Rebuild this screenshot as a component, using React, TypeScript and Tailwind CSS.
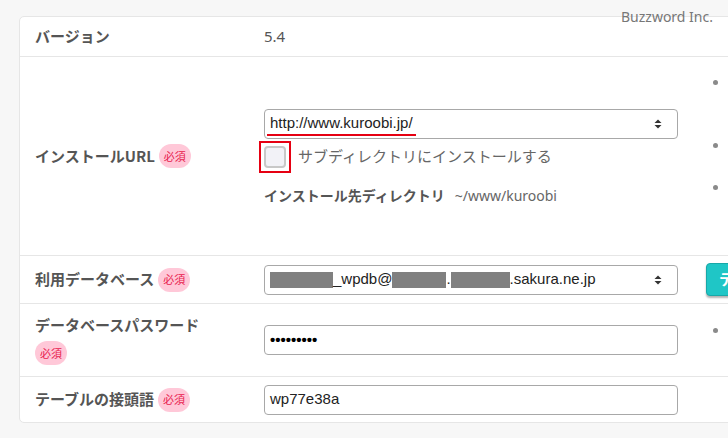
import React from 'react';

const Badge = () => (
  <span className="inline-flex items-center justify-center h-[24px] w-[32px] rounded-full bg-[#ffc8d8] text-[11px] text-[#e8204e] font-normal [font-family:'Noto_Sans_CJK_JP',sans-serif]">
    必須
  </span>
);

const Arrows = () => (
  <svg width="10" height="12" viewBox="0 0 10 12" className="shrink-0">
    <path d="M1.5 5 L5 1.5 L8.5 5 Z" fill="#333" />
    <path d="M1.5 7 L5 10.5 L8.5 7 Z" fill="#333" />
  </svg>
);

const Dot = ({ className = '' }: { className?: string }) => (
  <span className={`block w-[5px] h-[5px] rounded-full bg-[#8a8a8a] ml-[7px] ${className}`} />
);

const Redact = ({ w }: { w: string }) => <span className={`inline-block h-[16px] bg-[#808080] ${w}`} />;

const labelCls = 'w-[229px] shrink-0 text-[15px] font-bold text-[#555] flex items-center gap-[4px]';
const fieldCls =
  'w-[414px] h-[30px] border border-[#a8a8a8] rounded-[4px] bg-white flex items-center px-[5px] text-[15px] text-[#222] [font-family:"Liberation_Sans",Arial,sans-serif]';

export default function App() {
  return (
    <div className="w-[728px] h-[438px] overflow-hidden bg-[#f7f7f7] relative [font-family:'Noto_Sans_CJK_JP','Noto_Sans',sans-serif]">
      <div className="absolute right-[15px] top-[6px] text-[14px] text-[#777] [font-family:'Noto_Sans',sans-serif] z-10">
        Buzzword Inc.
      </div>
      <div className="pt-[16px] pl-[19px]">
        <div className="w-[900px] bg-white border border-[#e6e6e6] rounded-l-[5px]">
          {/* version */}
          <div className="h-[40px] flex items-center pl-[15px] border-b border-[#e6e6e6]">
            <div className={labelCls}>バージョン</div>
            <div className="text-[15px] text-[#555] [font-family:'Noto_Sans',sans-serif]">5.4</div>
          </div>

          {/* install url */}
          <div className="h-[199px] flex pl-[15px] border-b border-[#e6e6e6]">
            <div className={`${labelCls} self-center`}>
              インストールURL <Badge />
            </div>
            <div className="self-center flex flex-col mt-[2px]">
              <div className={`${fieldCls} justify-between pr-[14px]`}>
                <span className="relative">
                  http://www.kuroobi.jp/
                  <span className="absolute left-[-3px] right-[-3px] bottom-[-1px] h-[2px] bg-[#e60012]" />
                </span>
                <Arrows />
              </div>
              <div className="flex items-center mt-[2px] h-[32px]">
                <div className="w-[32px] h-[32px] border-2 border-[#e60012] flex items-center justify-center ml-[-5px]">
                  <span className="w-[22px] h-[22px] rounded-[4px] border-2 border-[#c8c8c8] bg-[#f2f2f7]" />
                </div>
                <span className="ml-[7px] text-[15px] text-[#666]">サブディレクトリにインストールする</span>
              </div>
              <div className="mt-[12px] flex items-center text-[14px] text-[#555]">
                <span className="font-bold">インストール先ディレクトリ</span>
                <span className="ml-[10px] [font-family:'Noto_Sans',sans-serif] text-[#666]">~/www/kuroobi</span>
              </div>
            </div>
            <div className="ml-[28px] pt-[23px] flex flex-col">
              <Dot />
              <Dot className="mt-[58px]" />
              <Dot className="mt-[37px]" />
            </div>
          </div>

          {/* database */}
          <div className="h-[48px] flex items-center pl-[15px] border-b border-[#e6e6e6]">
            <div className={labelCls}>
              利用データベース <Badge />
            </div>
            <div className={`${fieldCls} justify-between pr-[14px] text-[15.5px]`}>
              <span className="flex items-center">
                <Redact w="w-[63px]" />
                _wpdb@
                <Redact w="w-[54px]" />.
                <Redact w="w-[59px]" />
                .sakura.ne.jp
              </span>
              <Arrows />
            </div>
            <button className="ml-[28px] h-[33px] px-[12px] rounded-[4px] bg-[#1fc6c6] text-white font-bold text-[15px] shadow-[0_2px_2px_rgba(0,0,0,0.3)] border border-[#18a8a8] whitespace-nowrap">
              テスト接続
            </button>
          </div>

          {/* password */}
          <div className="h-[73px] flex pl-[15px] border-b border-[#e6e6e6]">
            <div className="w-[229px] shrink-0 pt-[10px] text-[15px] font-bold text-[#555]">
              <div>データベースパスワード</div>
              <div className="mt-[4px]">
                <Badge />
              </div>
            </div>
            <div className={`${fieldCls} mt-[21px] text-[15px] font-bold text-black`}>•••••••••</div>
            <div className="ml-[28px] pt-[24px]">
              <Dot />
            </div>
          </div>

          {/* prefix */}
          <div className="h-[45px] flex items-center pl-[15px]">
            <div className={labelCls}>
              テーブルの接頭語 <Badge />
            </div>
            <div className={fieldCls}>wp77e38a</div>
          </div>
        </div>
      </div>
    </div>
  );
}
